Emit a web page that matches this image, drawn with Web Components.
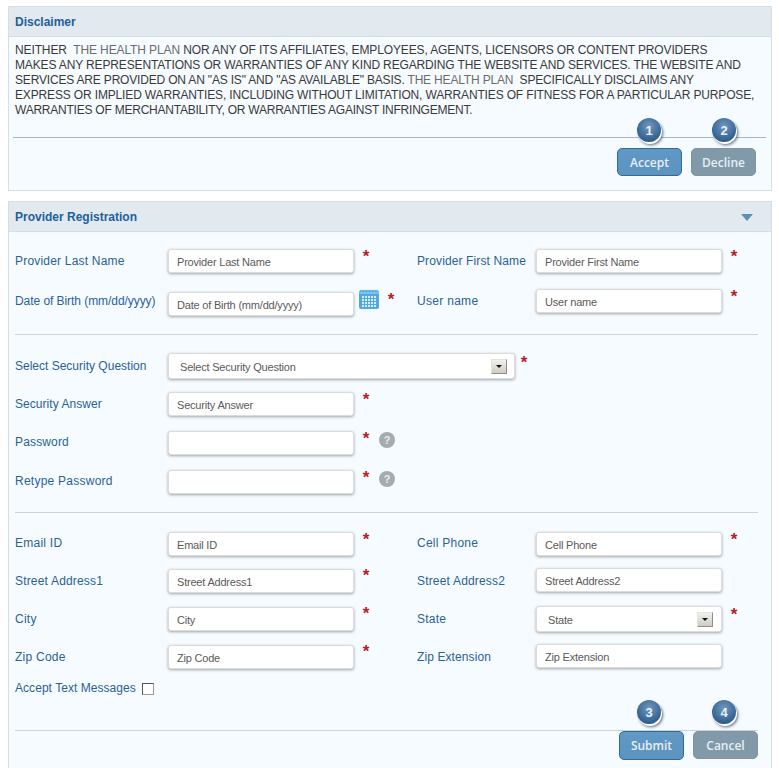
<!DOCTYPE html>
<html lang="en">
<head>
<meta charset="utf-8">
<title>Provider Registration</title>
<style>
    html, body { margin: 0; height: 768px; overflow: hidden; background: #fff; }
    body { font-family: "Liberation Sans", Arial, sans-serif; padding: 6px 7px 0 8px; box-sizing: border-box; }
    .first { margin-top: 17px; }
    .mt13 { margin-top: 13px; }
    .mt15 { margin-top: 15px; }
    hp-panel + hp-panel { margin-top: 10px; }
    .muted { color: #6c6c6c; }
</style>
</head>
<body>

<hp-panel heading="Disclaimer">
    <hp-disclaimer>
        <span style="letter-spacing:-0.12px">NEITHER <span class="muted">&nbsp;THE HEALTH PLAN</span> NOR ANY OF ITS AFFILIATES, EMPLOYEES, AGENTS, LICENSORS OR CONTENT PROVIDERS</span><br>
        <span style="letter-spacing:-0.14px">MAKES ANY REPRESENTATIONS OR WARRANTIES OF ANY KIND REGARDING THE WEBSITE AND SERVICES. THE WEBSITE AND</span><br>
        <span style="letter-spacing:-0.18px">SERVICES ARE PROVIDED ON AN "AS IS" AND "AS AVAILABLE" BASIS. <span class="muted">THE HEALTH PLAN</span> &nbsp;SPECIFICALLY DISCLAIMS ANY</span><br>
        <span>EXPRESS OR IMPLIED WARRANTIES, INCLUDING WITHOUT LIMITATION, WARRANTIES OF FITNESS FOR A PARTICULAR PURPOSE,</span><br>
        <span style="letter-spacing:-0.23px">WARRANTIES OF MERCHANTABILITY, OR WARRANTIES AGAINST INFRINGEMENT.</span>
    </hp-disclaimer>
    <hp-rule tone="dark" inset="4" right="5" top="19"></hp-rule>
    <hp-actions top="10" right="15" bottom="14">
        <hp-button badge="1" badge-x="20" badge-y="-30">Accept</hp-button>
        <hp-button badge="2" badge-x="21" badge-y="-30" tone="grey">Decline</hp-button>
    </hp-actions>
</hp-panel>

<hp-panel heading="Provider Registration" arrow>
    <hp-row class="first">
        <hp-field label="Provider Last Name" track="0.2" text="Provider Last Name" required></hp-field>
        <hp-field label="Provider First Name" track="0.12" text="Provider First Name" required></hp-field>
    </hp-row>
    <hp-row style="margin-top:16px">
        <hp-field label="Date of Birth (mm/dd/yyyy)" track="-0.06" text="Date of Birth (mm/dd/yyyy)" required calendar drop="3" star-y="3"></hp-field>
        <hp-field label="User name" track="0.3" text="User name" required></hp-field>
    </hp-row>
    <hp-rule top="18"></hp-rule>
    <hp-row style="margin-top:18px">
        <hp-field label="Select Security Question" track="0" label-y="2" text="Select Security Question" required select wide star-y="2"></hp-field>
    </hp-row>
    <hp-row class="mt13">
        <hp-field label="Security Answer" track="0.05" text="Security Answer" required></hp-field>
    </hp-row>
    <hp-row class="mt15">
        <hp-field label="Password" track="0.15" label-y="0" required help></hp-field>
    </hp-row>
    <hp-row class="mt15">
        <hp-field label="Retype Password" label-y="0" required help></hp-field>
    </hp-row>
    <hp-rule top="18"></hp-rule>
    <hp-row style="margin-top:19px">
        <hp-field label="Email ID" label-y="0" text="Email ID" required></hp-field>
        <hp-field label="Cell Phone" label-y="0" text="Cell Phone" required></hp-field>
    </hp-row>
    <hp-row style="margin-top:12px">
        <hp-field label="Street Address1" track="0.18" label-y="2" text="Street Address1" required drop="1"></hp-field>
        <hp-field label="Street Address2" track="0.18" label-y="2" text="Street Address2"></hp-field>
    </hp-row>
    <hp-row class="mt13">
        <hp-field label="City" label-y="2" text="City" required drop="1"></hp-field>
        <hp-field label="State" label-y="2" text="State" required select star-y="1"></hp-field>
    </hp-row>
    <hp-row style="margin-top:12px">
        <hp-field label="Zip Code" label-y="2" text="Zip Code" required drop="1"></hp-field>
        <hp-field label="Zip Extension" track="0.1" label-y="2" text="Zip Extension"></hp-field>
    </hp-row>
    <hp-check style="margin-top:13px">Accept Text Messages</hp-check>
    <hp-rule top="35"></hp-rule>
    <hp-actions top="0" right="13" bottom="20">
        <hp-button badge="3" badge-x="18" badge-y="-31" tall>Submit</hp-button>
        <hp-button badge="4" badge-x="19" badge-y="-31" tone="grey">Cancel</hp-button>
    </hp-actions>
</hp-panel>

<script>
class HpPanel extends HTMLElement {
    connectedCallback() {
        this.attachShadow({ mode: 'open' });
        const arrow = this.hasAttribute('arrow') ? '<span class="arrow"></span>' : '';
        this.shadowRoot.innerHTML = `
            <style>
                :host { display: block; border: 1px solid #d3dee5; background: #f5fbff; }
                .head {
                    height: 30px;
                    box-sizing: border-box;
                    display: flex;
                    align-items: center;
                    justify-content: space-between;
                    padding: 1px 18px 0 6px;
                    background: #e2eaf0;
                    border-bottom: 1px solid #d3dfe7;
                    color: #22609a;
                    font: bold 12px "Liberation Sans", Arial, sans-serif;
                }
                .arrow {
                    width: 0;
                    height: 0;
                    border-left: 6px solid transparent;
                    border-right: 6px solid transparent;
                    border-top: 7px solid #5e8fb5;
                }
            </style>
            <div class="head"><span>${this.getAttribute('heading')}</span>${arrow}</div>
            <slot></slot>
        `;
    }
}
customElements.define('hp-panel', HpPanel);

class HpDisclaimer extends HTMLElement {
    connectedCallback() {
        this.attachShadow({ mode: 'open' });
        this.shadowRoot.innerHTML = `
            <style>
                :host {
                    display: block;
                    padding: 6px 6px 0;
                    color: #3a3a3a;
                    font: 12px/15px "Liberation Sans", Arial, sans-serif;
                    letter-spacing: -0.15px;
                    white-space: nowrap;
                }
            </style>
            <slot></slot>
        `;
    }
}
customElements.define('hp-disclaimer', HpDisclaimer);

class HpRule extends HTMLElement {
    connectedCallback() {
        this.attachShadow({ mode: 'open' });
        const top = this.getAttribute('top') || 0;
        const left = this.getAttribute('inset') || 6;
        const right = this.getAttribute('right') || 13;
        const color = this.getAttribute('tone') === 'dark' ? '#a9b8c0' : '#c6d6e0';
        this.shadowRoot.innerHTML = `
            <style>
                :host { display: block; height: 1px; margin: ${top}px ${right}px 0 ${left}px; background: ${color}; }
            </style>
        `;
    }
}
customElements.define('hp-rule', HpRule);

class HpRow extends HTMLElement {
    connectedCallback() {
        this.attachShadow({ mode: 'open' });
        this.shadowRoot.innerHTML = `
            <style>
                :host { display: grid; grid-template-columns: 402px 1fr; padding-left: 6px; align-items: start; }
            </style>
            <slot></slot>
        `;
    }
}
customElements.define('hp-row', HpRow);

const CALENDAR_ICON = `
    <svg class="cal" width="20" height="20" viewBox="0 0 20 20" aria-hidden="true">
        <path d="M1 1h18v1a1 1 0 0 1 1 1v15a2 2 0 0 1-2 2H2a2 2 0 0 1-2-2V3a1 1 0 0 1 1-1z" fill="#4fa8e4"/>
        <path d="M3 0.5v2M6 0.5v2M9 0.5v2M12 0.5v2M15 0.5v2M18 0.5v2" stroke="#a9d6f3" stroke-width="1"/>
        <rect x="0" y="3" width="20" height="2" fill="#7cc2ef"/>
        <g fill="#d9eefb">
            ${[7, 10, 13, 16].map(y => [3, 6, 9, 12, 15].map(x => `<rect x="${x}" y="${y}" width="2" height="2"/>`).join('')).join('')}
        </g>
    </svg>`;

class HpField extends HTMLElement {
    connectedCallback() {
        this.attachShadow({ mode: 'open' });
        const text = this.getAttribute('text') || '';
        const drop = this.getAttribute('drop') || 0;
        const isSelect = this.hasAttribute('select');
        const isWide = this.hasAttribute('wide');
        const track = this.getAttribute('track') || 0.25;
        const labelY = this.hasAttribute('label-y') ? +this.getAttribute('label-y') : 1;
        const starY = this.getAttribute('star-y') || 0;
        const caret = isSelect ? '<span class="drop"><i></i></span>' : '';
        const calendar = this.hasAttribute('calendar') ? CALENDAR_ICON : '';
        const star = this.hasAttribute('required') ? '<span class="star">*</span>' : '';
        const help = this.hasAttribute('help') ? '<span class="help">?</span>' : '';
        this.shadowRoot.innerHTML = `
            <style>
                :host { display: grid; grid-template-columns: var(--label-w, 153px) auto 1fr; align-items: start; }
                :host(:nth-child(2)) { --label-w: 119px; }
                .label {
                    color: #2b6296;
                    font: 12px/24px "Liberation Sans", Arial, sans-serif;
                    letter-spacing: ${track}px;
                    margin-top: ${labelY - 1}px;
                    white-space: nowrap;
                }
                .box {
                    width: 186px;
                    height: 24px;
                    box-sizing: border-box;
                    margin-top: ${drop}px;
                    padding: 0 8px;
                    display: flex;
                    align-items: center;
                    justify-content: space-between;
                    background: #fff;
                    border: 1px solid #dcdcdc;
                    border-radius: 3px;
                    box-shadow: 0 1px 3px rgba(0, 0, 0, 0.35);
                    color: #5a5a5a;
                    font: 11px "Liberation Sans", Arial, sans-serif;
                    letter-spacing: -0.2px;
                    white-space: nowrap;
                }
                .box > span:first-child { padding-top: 2px; }
                .box.select { height: 26px; padding: 0 8px 0 11px; }
                .box.wide { width: 347px; padding-right: 7px; }
                .marks { display: flex; align-items: flex-start; padding-left: ${isWide ? 2 : 5}px; }
                .cal { margin: 0 5px 0 0; }
                .star {
                    color: #b5202a;
                    font: bold 17px/16px "Liberation Sans", Arial, sans-serif;
                    width: 14px;
                    text-align: center;
                    flex: none;
                    margin-top: ${starY}px;
                }
                .help {
                    width: 16px;
                    height: 16px;
                    margin: 1px 0 0 6px;
                    border-radius: 50%;
                    background: #a5abb1;
                    color: #e9ecee;
                    font: bold 11px/16px "Liberation Sans", Arial, sans-serif;
                    text-align: center;
                }
                .drop {
                    width: 16px;
                    height: 15px;
                    box-sizing: border-box;
                    display: flex;
                    align-items: center;
                    justify-content: center;
                    background: linear-gradient(#f1f0ec, #cfccc4);
                    border: 1px solid #8f8f8a;
                    border-top-color: #e4e3de;
                    border-left-color: #e4e3de;
                }
                .drop i {
                    width: 0;
                    height: 0;
                    border-left: 3px solid transparent;
                    border-right: 3px solid transparent;
                    border-top: 3px solid #111;
                    margin-top: 1px;
                }
            </style>
            <div class="label">${this.getAttribute('label')}</div>
            <div class="box ${isSelect ? 'select' : ''} ${isWide ? 'wide' : ''}"><span>${text}</span>${caret}</div>
            <div class="marks">${calendar}${star}${help}</div>
        `;
    }
}
customElements.define('hp-field', HpField);

class HpCheck extends HTMLElement {
    connectedCallback() {
        this.attachShadow({ mode: 'open' });
        this.shadowRoot.innerHTML = `
            <style>
                :host {
                    display: flex;
                    align-items: center;
                    height: 13px;
                    padding-left: 6px;
                    gap: 6px;
                    color: #2b6296;
                    font: 12px/13px "Liberation Sans", Arial, sans-serif;
                    letter-spacing: 0.05px;
                }
                .tick {
                    width: 12px;
                    height: 12px;
                    box-sizing: border-box;
                    background: #fff;
                    border: 1px solid #555;
                    border-right-color: #999;
                    border-bottom-color: #999;
                }
            </style>
            <slot></slot><span class="tick"></span>
        `;
    }
}
customElements.define('hp-check', HpCheck);

class HpActions extends HTMLElement {
    connectedCallback() {
        this.attachShadow({ mode: 'open' });
        const top = this.getAttribute('top') || 0;
        const right = this.getAttribute('right') || 0;
        const bottom = this.getAttribute('bottom') || 0;
        this.shadowRoot.innerHTML = `
            <style>
                :host { display: flex; justify-content: flex-end; align-items: flex-start; gap: 9px; padding: ${top}px ${right}px ${bottom}px 0; }
            </style>
            <slot></slot>
        `;
    }
}
customElements.define('hp-actions', HpActions);

class HpButton extends HTMLElement {
    connectedCallback() {
        this.attachShadow({ mode: 'open' });
        const grey = this.getAttribute('tone') === 'grey';
        const height = this.hasAttribute('tall') ? 29 : 28;
        this.shadowRoot.innerHTML = `
            <style>
                :host { display: block; position: relative; }
                .btn {
                    width: 65px;
                    height: ${height}px;
                    box-sizing: border-box;
                    display: flex;
                    align-items: center;
                    justify-content: center;
                    border-radius: 5px;
                    border: 1px solid ${grey ? '#7d95a3' : '#2f6a96'};
                    background: ${grey ? '#8199a8' : 'linear-gradient(#6098c6, #5c93bf)'};
                    color: #e6eff5;
                    font: 600 12px "Open Sans", "Noto Sans", sans-serif;
                }
                .badge {
                    position: absolute;
                    left: ${this.getAttribute('badge-x')}px;
                    top: ${this.getAttribute('badge-y')}px;
                    width: 24px;
                    height: 24px;
                    border-radius: 50%;
                    display: flex;
                    align-items: center;
                    justify-content: center;
                    background: radial-gradient(circle at 50% 35%, #7397bb, #3f6d9b 55%, #1e4775);
                    box-shadow: 1px 2px 0 #fff, 2px 3px 3px rgba(30, 50, 70, 0.7);
                    color: #e9f0f6;
                    font: bold 13px "Liberation Sans", Arial, sans-serif;
                }
            </style>
            <div class="btn"><slot></slot></div>
            <span class="badge">${this.getAttribute('badge')}</span>
        `;
    }
}
customElements.define('hp-button', HpButton);
</script>
</body>
</html>
